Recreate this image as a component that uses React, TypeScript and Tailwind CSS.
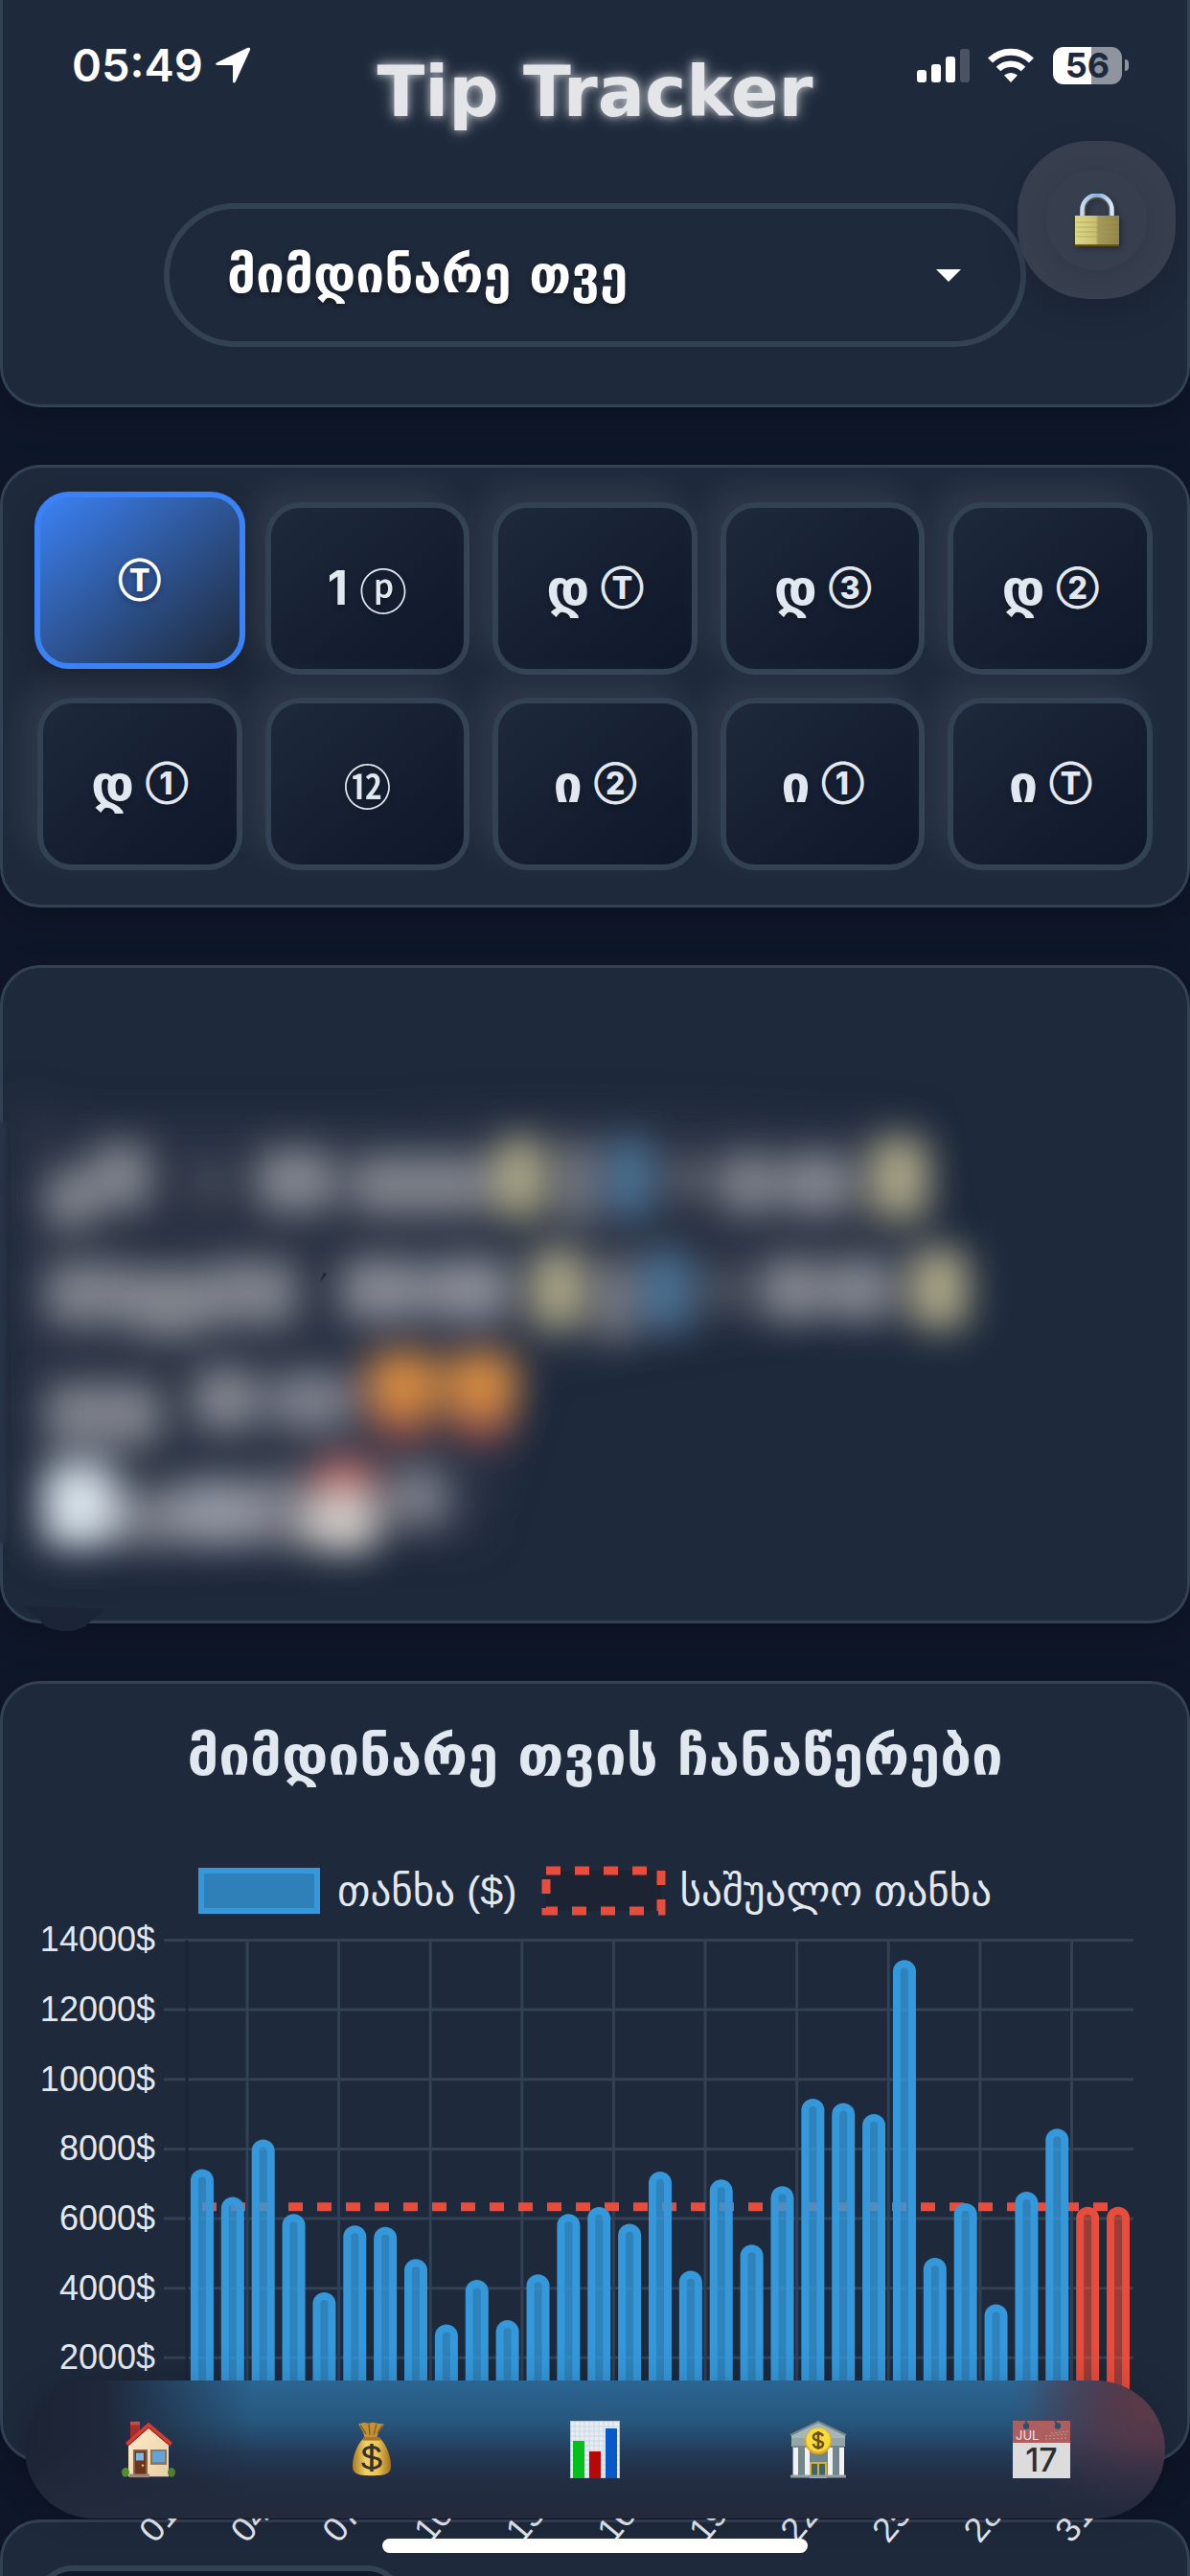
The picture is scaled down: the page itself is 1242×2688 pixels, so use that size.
import React from "react";

const card =
  "border-[3px] border-[#334155] bg-[#1e293b] shadow-[0_12px_36px_rgba(0,0,0,0.25)]";

type Tile = { ka?: string; mark: string; thin?: boolean; active?: boolean };

const tiles: Tile[] = [
  { mark: "Ⓣ", active: true },
  { ka: "1", mark: "ⓟ", thin: true },
  { ka: "დ", mark: "Ⓣ" },
  { ka: "დ", mark: "③" },
  { ka: "დ", mark: "②" },
  { ka: "დ", mark: "①" },
  { mark: "⑫", thin: true },
  { ka: "ი", mark: "②" },
  { ka: "ი", mark: "①" },
  { ka: "ი", mark: "Ⓣ" },
];

const amounts = [
  7420, 6620, 8270, 6130, 3880, 5800, 5760, 4840, 2960, 4240, 3080, 4400, 6130,
  6330, 5850, 7350, 4500, 7120, 5250, 6930, 9440, 9320, 9000, 13430, 4870, 6440,
  3540, 6770, 8580, 6340, 6340,
];
const average = 6340;
const dayLabels = ["01", "04", "07", "10", "13", "16", "19", "22", "25", "28", "31"];

const STEP = 31.87;
const LEFT = 192;
const BASE = 532;
const yOf = (v: number) => BASE - (v * 72.65) / 2000;

function Chart() {
  return (
    <svg
      viewBox="0 0 1236 565"
      className="relative z-10 block w-full overflow-visible"
      role="img"
      aria-label="თანხა ($)"
      fontFamily="'Liberation Sans', Arial, sans-serif"
      fontSize="36"
      fill="#e2e8f0"
    >
      {[14000, 12000, 10000, 8000, 6000, 4000, 2000].map((v) => (
        <g key={v}>
          <line x1="168" x2="1180" y1={yOf(v)} y2={yOf(v)} stroke="#334155" strokeWidth="3" />
          <text x="159" y={yOf(v) + 12} textAnchor="end">
            {v}$
          </text>
        </g>
      ))}
      {Array.from({ length: 10 }, (_, i) => (
        <line
          key={i}
          x1={255 + i * STEP * 3}
          x2={255 + i * STEP * 3}
          y1={yOf(14000)}
          y2={BASE}
          stroke="#334155"
          strokeWidth="3"
        />
      ))}
      <line x1={LEFT} x2={LEFT} y1={yOf(14000)} y2={BASE} stroke="#1b2536" strokeWidth="3" />
      <line
        x1="208"
        x2="1164"
        y1={yOf(average)}
        y2={yOf(average)}
        stroke="#e74c3c"
        strokeWidth="9"
        strokeDasharray="15 15"
      />
      {amounts.map((v, i) => {
        const x = LEFT + (i + 0.5) * STEP - 12;
        const y = yOf(v);
        const forecast = i > 28;
        return (
          <g key={i}>
            <path
              d={`M${x + 3} ${BASE}V${y + 12}a9 9 0 0 1 18 0V${BASE}z`}
              fill={forecast ? "#e74c3c" : "#3498db"}
              fillOpacity={forecast ? 0.6 : 0.8}
            />
            <path
              d={`M${x + 4} ${BASE}V${y + 12}a8 8 0 0 1 16 0V${BASE}`}
              fill="none"
              stroke={forecast ? "#e74c3c" : "#3498db"}
              strokeWidth="8"
            />
          </g>
        );
      })}
      {dayLabels.map((d, i) => (
        <text
          key={d}
          transform={`translate(${159 + i * STEP * 3} 654) rotate(-50)`}
        >
          {d}
        </text>
      ))}
    </svg>
  );
}

type Blob = [number, number, number, number, string];
const G = "#7f828b";
const blobs: Blob[] = [
  [42, 92, 54, 64, G], [88, 66, 66, 70, G], [196, 88, 36, 36, "#555a66"],
  [262, 72, 84, 66, "#82858e"], [360, 78, 146, 62, G], [510, 60, 56, 84, "#aba688"],
  [580, 62, 36, 90, "#7c7f88"], [628, 60, 48, 84, "#4b7396"], [688, 80, 50, 44, "#5c606b"],
  [746, 76, 60, 64, G], [810, 76, 76, 64, "#82858e"], [902, 60, 62, 84, "#aba688"],
  [42, 190, 94, 66, "#7f828b"], [130, 196, 84, 72, "#82858e"], [208, 188, 98, 68, G],
  [350, 186, 90, 66, "#858892"], [442, 186, 86, 66, "#898c96"], [548, 176, 58, 84, "#aba688"],
  [618, 184, 38, 90, "#7c7f88"], [664, 178, 52, 84, "#4b7396"], [726, 196, 48, 44, "#525764"],
  [788, 186, 68, 66, "#82858e"], [858, 186, 70, 66, "#82858e"], [944, 176, 62, 84, "#aba688"],
  [42, 316, 122, 66, "#7f828b"], [196, 300, 70, 66, "#82858e"], [276, 304, 88, 62, "#7c7f8a"],
  [378, 284, 74, 68, "#d58a42"], [460, 284, 74, 68, "#d58a42"],
  [382, 348, 66, 30, "#8f4a48"], [464, 348, 66, 30, "#8f4a48"],
  [40, 400, 76, 86, "#d8e2ea"], [120, 424, 62, 64, "#797d87"], [178, 416, 90, 70, "#9194a0"],
  [266, 410, 50, 78, "#7b7e88"], [320, 394, 68, 44, "#bd6e6c"], [316, 432, 74, 60, "#d0cbc8"],
  [398, 404, 66, 62, "#7a7e88"],
];

function HiddenSummary() {
  return (
    <svg viewBox="0 0 1236 560" className="block w-full overflow-visible" aria-hidden="true">
      <defs>
        <filter id="veil" x="-10%" y="-10%" width="120%" height="120%">
          <feGaussianBlur stdDeviation="19" />
        </filter>
        <filter id="soft" x="-200%" y="-10%" width="500%" height="120%">
          <feGaussianBlur stdDeviation="2" />
        </filter>
      </defs>
      <rect x="-5" y="40" width="8" height="440" fill="#253244" filter="url(#soft)" />
      <path d="M20 545Q40 560 44 566q22 10 42 0l20-18z" fill="#1b2537" />
      <path
        d="M10 30Q14 0 60 34H420Q520 20 960 40L990 220L560 290L500 480L60 500L20 480Z"
        fill="#323949"
        opacity="0.55"
        filter="url(#veil)"
      />
      <g filter="url(#veil)" transform="translate(2 -4)">
        {blobs.map(([x, y, w, h, c], i) => (
          <rect key={i} x={x} y={y} width={w} height={h} rx="18" fill={c} />
        ))}
      </g>
      <path d="M335 197q-3 7-4 9q4-3 7-8z" fill="#1e2635" />
    </svg>
  );
}

function House() {
  return (
    <svg viewBox="0 0 56 68" className="h-[60px] w-14" aria-hidden="true" preserveAspectRatio="none">
      <defs>
        <linearGradient id="wall" x1="0" y1="0" x2="1" y2="1">
          <stop offset="0" stopColor="#ffeccb" />
          <stop offset="1" stopColor="#e6cfa4" />
        </linearGradient>
      </defs>
      <rect x="9" y="1" width="10" height="20" fill="#a52e2a" />
      <rect x="9" y="1" width="10" height="4" fill="#cc4b42" />
      <path d="M7 28L28 6l21 22v38H7z" fill="url(#wall)" />
      <ellipse cx="4" cy="61" rx="4" ry="5.500" fill="#4f8f2e" />
      <ellipse cx="52" cy="61" rx="4" ry="5.500" fill="#4f7f2e" />
      <path d="M4 26L28 2l25 24-3 4L28 9 7 30z" fill="#d43c34" />
      <path d="M7 29L28 8l22 21" fill="none" stroke="#7c1d1a" strokeWidth="1" />
      <rect x="12" y="34" width="15" height="30" fill="#8a6247" />
      <rect x="14" y="36" width="11" height="28" fill="#6b3320" />
      <rect x="15" y="38" width="8" height="9" fill="#7ab9e8" />
      <circle cx="22" cy="53" r="1.300" fill="#f2c53a" />
      <rect x="30" y="34" width="17" height="18" fill="#8a7560" />
      <rect x="32" y="36" width="13" height="13" fill="#62a5da" />
      <rect x="8" y="63" width="21" height="4" fill="#998676" />
    </svg>
  );
}

function MoneyBag() {
  return (
    <svg viewBox="0 0 42 68" className="h-[58px] w-[42px]" aria-hidden="true" preserveAspectRatio="none">
      <defs>
        <linearGradient id="bag">
          <stop offset="0" stopColor="#a97a22" />
          <stop offset="0.350" stopColor="#f3d264" />
          <stop offset="0.650" stopColor="#edc654" />
          <stop offset="1" stopColor="#a06f1c" />
        </linearGradient>
      </defs>
      <path d="M7 3l6-2 4 1 5-1 5 1 7 1-6 10-2 8H14l-2-8z" fill="#c4913a" />
      <path d="M9 4l6 11M18 3l1 13M26 3l-3 13M32 4l-5 10" stroke="#8a5f1c" strokeWidth="1.500" />
      <path d="M13 20h16c7 7 12 22 12 34 0 9-4 12-20 12S1 63 1 54c0-12 5-27 12-34z" fill="url(#bag)" />
      <path d="M12 19h18v4H12z" fill="#a87428" />
      <path
        d="M29 37c-1-4-4-6-8-6s-8 2-8 6c0 9 17 4 17 13 0 4-4 7-9 7s-9-3-9-7M21 27v34"
        fill="none"
        stroke="#3a302c"
        strokeWidth="3.500"
      />
    </svg>
  );
}

function BarChart() {
  return (
    <svg viewBox="0 0 52 60" className="h-[60px] w-[52px]" aria-hidden="true">
      <rect width="52" height="60" fill="#b9c6d3" />
      <rect x="1" y="1" width="50" height="58" fill="#e7edf4" />
      <path
        d="M5 1v58M10 1v58M15 1v58M20 1v58M25 1v58M30 1v58M35 1v58M40 1v58M45 1v58M1 6h50M1 11h50M1 16h50M1 21h50M1 26h50M1 31h50M1 36h50M1 41h50M1 46h50M1 51h50M1 56h50"
        stroke="#ccd8e4"
        strokeWidth="1"
      />
      <rect x="3" y="21" width="12" height="39" fill="#06bf1c" />
      <rect x="20" y="32" width="12" height="28" fill="#b80707" />
      <rect x="37" y="8" width="12" height="52" fill="#0659c7" />
    </svg>
  );
}

function Bank() {
  return (
    <svg viewBox="0 0 60 60" className="size-[60px]" aria-hidden="true">
      <path d="M2 15L30 1l28 14v12H2z" fill="#a6b5b7" />
      <path d="M1 15L30 1l29 14" fill="none" stroke="#74878a" strokeWidth="2" />
      <rect x="2" y="18" width="56" height="8" fill="#93a6a8" />
      <rect x="3" y="26" width="54" height="33" fill="#71878c" />
      <rect x="4" y="28" width="5" height="30" fill="#f0f3f5" />
      <rect x="16" y="28" width="5" height="30" fill="#f0f3f5" />
      <rect x="40" y="28" width="5" height="30" fill="#f0f3f5" />
      <rect x="52" y="28" width="5" height="30" fill="#f0f3f5" />
      <rect x="22" y="44" width="16" height="15" fill="#3d6470" stroke="#d6b12c" strokeWidth="2" />
      <path d="M30 44v15" stroke="#d6b12c" strokeWidth="2" />
      <path d="M1 58h58" stroke="#8fa0a3" strokeWidth="3" />
      <circle cx="30" cy="21" r="14" fill="#e9a820" />
      <circle cx="30" cy="20" r="12.500" fill="#f4dc3c" />
      <path
        d="M35 16c-1-2-3-3-5-3s-5 1-5 4c0 5 10 3 10 7 0 3-2 4-5 4s-5-2-5-4M30 11v19"
        fill="none"
        stroke="#6b4e12"
        strokeWidth="2.500"
      />
    </svg>
  );
}

function CalendarIcon() {
  return (
    <svg viewBox="0 0 60 60" className="size-[60px] overflow-visible" aria-hidden="true">
      <rect width="60" height="60" fill="#dcdcdc" />
      <rect width="60" height="23" fill="#ac5f5e" />
      <path d="M14 0v5M44 0l3 5" stroke="#2a4863" strokeWidth="1.500" />
      <circle cx="14" cy="5.500" r="3.200" fill="#25506f" />
      <circle cx="47" cy="5.500" r="3.200" fill="#25506f" />
      <path d="M34 19l24-1M34 16l24-2M40 13l18-2" stroke="#c99795" strokeWidth="1" strokeDasharray="2 2" />
      <text x="3" y="20" fontFamily="Inter, sans-serif" fontSize="13" fill="#f3e4e4">
        JUL
      </text>
      <text x="30" y="53" textAnchor="middle" fontFamily="Inter, sans-serif" fontSize="34" fontWeight="500" fill="#2f2f2f">
        17
      </text>
    </svg>
  );
}

function Padlock() {
  return (
    <svg viewBox="0 0 46 56" className="h-14 w-[46px] drop-shadow-[3px_3px_3px_rgba(0,0,0,0.3)]" aria-hidden="true">
      <defs>
        <linearGradient id="brass">
          <stop offset="0" stopColor="#ddd989" />
          <stop offset="0.470" stopColor="#c9bf72" />
          <stop offset="0.530" stopColor="#a39a58" />
          <stop offset="1" stopColor="#928447" />
        </linearGradient>
        <linearGradient id="steel">
          <stop offset="0" stopColor="#c9dcf5" />
          <stop offset="0.500" stopColor="#86aee0" />
          <stop offset="1" stopColor="#dbe8f8" />
        </linearGradient>
      </defs>
      <path d="M7.500 26V17a15.500 15.500 0 0 1 31 0v9" fill="none" stroke="url(#steel)" strokeWidth="4.500" />
      <path d="M10.500 24V17a12.500 12.500 0 0 1 25 0v7" fill="none" stroke="#6f6440" strokeWidth="1" />
      <rect y="23" width="46" height="32" fill="url(#brass)" />
      <rect y="53" width="46" height="2" fill="#66521d" />
      <path d="M1 30h44M1 35h44M1 40h44M1 45h44" stroke="#a89c55" strokeWidth="0.600" />
    </svg>
  );
}

function StatusBar() {
  return (
    <div className="absolute inset-x-0 top-0 z-30 flex items-center justify-between pr-16 pl-[75px] pt-[42px] text-white">
      <div className="flex items-center gap-3">
        <span className="font-[Inter] text-[47px] leading-[52px] font-semibold">05:49</span>
        <svg viewBox="0 0 38 38" className="size-[38px]" aria-hidden="true">
          <path d="M37 3L22 36q-2 3-3 0V20q0-1-1-1H3q-4-1 0-3L34 1q4-1 3 2z" fill="#fff" />
        </svg>
      </div>
      <div className="flex items-center">
        <svg viewBox="0 0 55 36" className="h-9 w-[55px]" fill="#fff" aria-hidden="true">
          <rect y="23" width="10" height="13" rx="3" />
          <rect x="15" y="17" width="10" height="19" rx="3" />
          <rect x="30" y="9" width="10" height="27" rx="3" />
          <rect x="45" y="1" width="10" height="35" rx="3" fillOpacity="0.200" />
        </svg>
        <svg viewBox="0 0 48 36" className="ml-[19px] h-9 w-12" fill="none" stroke="#fff" aria-hidden="true">
          <path d="M2.500 13a30.500 30.500 0 0 1 43 0" strokeWidth="7" />
          <path d="M11 22a18.500 18.500 0 0 1 26 0" strokeWidth="6.500" />
          <path d="M24 36l-7-7.500q7-5 14 0z" fill="#fff" stroke="none" />
        </svg>
        <div className="ml-5 flex h-[39px] w-[72px] items-center justify-center rounded-[11px] bg-linear-to-r from-white from-56% to-[#8f959f] to-56% font-[Inter] text-[36px] leading-none font-bold text-[#1e293b]">
          56
        </div>
        <span className="ml-[3px] h-3 w-1 rounded-r-full bg-[#8f959f]" />
      </div>
    </div>
  );
}

const nav = [
  { label: "მთავარი", icon: <House /> },
  { label: "თანხა", icon: <MoneyBag /> },
  { label: "სტატისტიკა", icon: <BarChart /> },
  { label: "ბანკი", icon: <Bank /> },
  { label: "კალენდარი", icon: <CalendarIcon /> },
];

export default function App() {
  return (
    <div className="relative h-screen overflow-hidden bg-[#0f172a] font-['DejaVu_Sans',sans-serif] text-[#e2e8f0]">
      <StatusBar />
      <main className="flex flex-col gap-[60px]">
        <header className={`relative rounded-b-[42px] pt-[52px] pb-[60px] ${card} border-t-0`}>
          <h1 className="text-center text-[73px] leading-[88px] font-bold text-[#e3e5e9] [text-shadow:0_0_9px_rgba(255,255,255,0.6),0_0_18px_rgba(255,255,255,0.4)]">
            Tip Tracker
          </h1>
          <div className="relative mx-[168px] mt-[72px]">
            <select
              aria-label="პერიოდი"
              className="h-[150px] w-full appearance-none rounded-full border-[6px] border-[#334155] bg-[#1e293b] pl-[60px] text-[53px] font-bold text-white [text-shadow:0_3px_6px_rgba(0,0,0,0.4)]"
            >
              <option>მიმდინარე თვე</option>
            </select>
            <svg viewBox="0 0 26 13" className="pointer-events-none absolute top-[69px] right-[68px] h-[13px] w-[26px]" aria-hidden="true">
              <path d="M0 0h26L13 13z" fill="#fff" />
            </svg>
          </div>
          <button
            type="button"
            aria-label="დაბლოკვა"
            className="absolute top-[147px] right-3 flex size-[165px] items-center justify-center rounded-[75px] bg-[#373f4f] shadow-[0_12px_36px_rgba(0,0,0,0.15)]"
          >
            <span className="flex size-[105px] items-center justify-center rounded-full shadow-[0_6px_24px_rgba(0,0,0,0.1)]">
              <Padlock />
            </span>
          </button>
        </header>

        <section className={`grid grid-cols-5 gap-6 rounded-[42px] p-9 ${card}`}>
          {tiles.map((t, i) => (
            <button
              key={i}
              type="button"
              className={
                t.active
                  ? "z-10 -mx-[3px] -mt-[11px] mb-[6px] flex items-center justify-center rounded-[36px] border-[6px] border-[#3b82f6] bg-linear-to-br from-[#3b82f6] to-[#1e293b] font-bold text-white shadow-[0_12px_30px_rgba(0,0,0,0.2)] [text-shadow:0_3px_6px_rgba(0,0,0,0.3)]"
                  : "flex h-[180px] items-center justify-center gap-3 rounded-[36px] border-[6px] border-[#334155] bg-linear-to-br from-[#1e293b] to-[#0f172a] font-bold shadow-[-15px_-15px_36px_rgba(255,255,255,0.08)] [text-shadow:0_3px_6px_rgba(0,0,0,0.3)]"
              }
            >
              {t.ka && (
                <span className={t.ka === "1" ? "font-[Inter] text-[49px]" : "text-[54px]"}>
                  {t.ka}
                </span>
              )}
              <span
                className={
                  t.thin
                    ? "font-['Noto_Sans_CJK_JP',sans-serif] text-[50px] leading-none font-medium"
                    : "font-[Inter,sans-serif] text-[32px] leading-none font-extrabold"
                }
              >
                {t.mark}
              </span>
            </button>
          ))}
        </section>

        <section className={`rounded-[42px] pt-[121px] ${card}`}>
          <HiddenSummary />
        </section>

        <section className={`rounded-[42px] ${card}`}>
          <h2 className="pt-[39px] text-center text-[58px] leading-[72px] font-bold">
            მიმდინარე თვის ჩანაწერები
          </h2>
          <div className="mt-[75px] -mb-[2px] flex items-center justify-center gap-[25px] font-['Liberation_Sans','DejaVu_Sans',sans-serif] text-[43px] leading-[60px]">
            <span className="flex items-center gap-[18px]">
              <span className="h-12 w-[127px] border-[6px] border-[#3498db] bg-[#2f80b8]" />
              თანხა ($)
            </span>
            <span className="flex items-center gap-[15px]">
              <svg viewBox="0 0 130 52" className="h-[52px] w-[130px]" aria-hidden="true">
                <rect x="5" y="5" width="120" height="42" fill="#1c2434" stroke="#e74c3c" strokeWidth="9" strokeDasharray="15 15" />
              </svg>
              საშუალო თანხა
            </span>
          </div>
          <Chart />
        </section>

        <section className={`rounded-[42px] px-9 pt-[45px] pb-36 ${card}`}>
          <select aria-label="წელი" className="h-[120px] w-[381px] appearance-none rounded-[36px] border-[6px] border-[#334155] bg-[#0f172a]" />
        </section>
      </main>

      <nav className="absolute inset-x-[26px] bottom-[60px] z-20 grid h-36 grid-cols-5 items-center rounded-full bg-[linear-gradient(to_top,#222a3c_0%,rgba(34,42,60,0)_55%),radial-gradient(150px_130px_at_99%_15%,#5a3a48_10%,rgba(90,58,72,0)_100%),linear-gradient(to_left,#35304a_1%,rgba(53,48,74,0)_12%),linear-gradient(to_right,#1b2234_0%,#1f283a_7%,rgba(31,40,58,0)_20%),linear-gradient(to_bottom,#2c6592_0%,#27587f_28%,#243f5e_50%,#23304a_72%,#222c3e_100%)] px-3 shadow-[0_0_36px_rgba(0,0,0,0.15)]">
        {nav.map((n) => (
          <button key={n.label} type="button" aria-label={n.label} className="flex h-full items-center justify-center">
            {n.icon}
          </button>
        ))}
      </nav>
      <div className="absolute bottom-6 left-1/2 z-20 h-[15px] w-[444px] -translate-x-1/2 rounded-full bg-white" />
    </div>
  );
}
